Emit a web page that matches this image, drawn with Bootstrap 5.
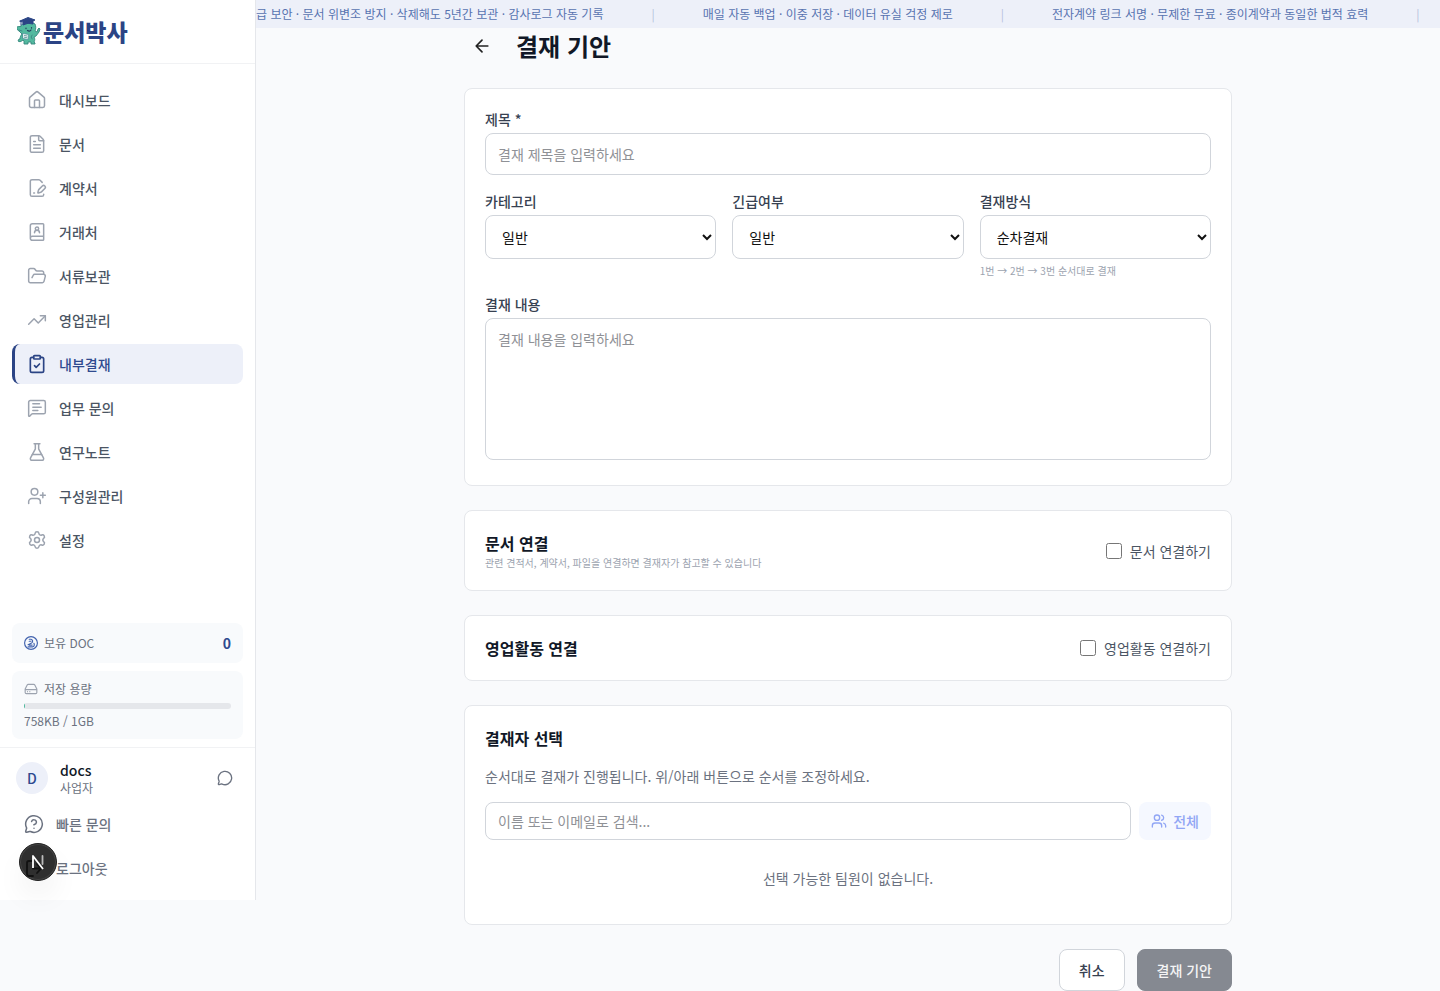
<!DOCTYPE html>
<html lang="ko">
<head>
<meta charset="utf-8">
<meta name="viewport" content="width=device-width, initial-scale=1">
<title>결재 기안 - 문서박사</title>
<link href="https://cdn.jsdelivr.net/npm/bootstrap@5.3.0/dist/css/bootstrap.min.css" rel="stylesheet">
<style>
  body { font-family: "Noto Sans CJK KR", sans-serif; font-size: 14px; line-height: 20px; background: #f9fafc; color: #111827; }
  a { text-decoration: none; }
  svg { flex: none; fill: none; stroke: currentColor; stroke-width: 1.8; stroke-linecap: round; stroke-linejoin: round; }
  .i20 { width: 20px; height: 20px; }
  .i16 { width: 16px; height: 16px; }
  .i14 { width: 14px; height: 14px; }
  .bold-line { stroke-width: 2; }
  .sidebar { width: 256px; background: #fff; border-right: 1px solid #e5e7eb; }
  .brand { height: 64px; padding: 0 17px 2px; border-bottom: 1px solid #f1f2f4; color: #2b4485; font-size: 23px; font-weight: 900; gap: 2px; }
  .brand svg { width: 24px; height: 30px; }
  .side-nav { padding: 16px 12px 63px; gap: 4px; }
  .side-link { height: 40px; padding: 0 12px; gap: 12px; border-left: 3px solid transparent; border-radius: 8px; color: #4b5563; font-weight: 500; }
  .side-link svg { color: #9ca3af; }
  .side-link.current { background: #edf0f9; border-color: #2b4485; color: #2f4a8f; }
  .side-link.current svg { color: #2b4485; stroke-width: 2; }
  .widget { background: #f8fafc; border-radius: 8px; padding: 10px 12px; font-size: 12px; line-height: 16px; color: #6b7280; }
  .widget svg { margin-right: 6px; }
  .coin { color: #4263ae; }
  .disk { color: #9ca3af; }
  .balance { font-size: 14px; line-height: 20px; font-weight: 700; color: #2f4a8f; }
  .progress.usage { height: 6px; margin: 6px 0 4px; border-radius: 3px; background: #e5e7eb; }
  .usage .progress-bar { background: #4cb89d; }
  .account { margin-top: 8px; padding: 12px 12px; border-top: 1px solid #f1f2f4; }
  .profile { padding: 0 10px 0 4px; height: 36px; margin-bottom: 8px; gap: 12px; }
  .avatar { width: 32px; height: 32px; background: #edf0f9; color: #2f4a8f; font-weight: 500; }
  .user-name { font-weight: 500; }
  .role { font-size: 12px; line-height: 16px; color: #6b7280; }
  .plain { background: none; border: 0; padding: 0; color: #6b7280; }
  .account-link { height: 40px; padding: 0 12px; gap: 12px; color: #6b7280; font-weight: 500; }
  .dev-badge { position: absolute; left: 19px; bottom: 19px; width: 38px; height: 38px; padding: 0; border: 1px solid #222; background: #2f2f2f; color: #fff; box-shadow: inset 0 0 0 1px #454545, 0 16px 32px -8px rgba(0,0,0,.14); }
  .ticker { height: 28px; overflow: hidden; background: #edf0f9; color: #5873b0; font-size: 12px; gap: 48px; }
  .ticker span { white-space: nowrap; flex: none; }
  .ticker .tick-sep { color: #b4c1dc; }
  main { min-width: 0; }
  .form-page { max-width: 768px; margin: 0 auto; }
  .page-head { height: 36px; gap: 16px; margin-bottom: 24px; }
  .page-head h1 { font-size: 24px; line-height: 32px; font-weight: 700; margin: 0; }
  .back { width: 36px; height: 36px; color: #222; }
  .panel { background: #fff; border: 1px solid #e5e7eb; border-radius: 8px; padding: 20px; margin-bottom: 24px; }
  .panel h2 { font-size: 16px; line-height: 24px; font-weight: 700; margin: 0; }
  .form-label { display: block; font-weight: 500; color: #374151; margin-bottom: 4px; }
  .field { display: block; width: 100%; background: #fff; border: 1px solid #d1d5db; border-radius: 8px; padding: 8px 12px; font-size: 14px; line-height: 24px; color: #111; }
  .field::placeholder { color: #8f9196; opacity: 1; }
  select.field { height: 44px; }
  textarea.field { height: 142px; resize: none; margin-bottom: 5px; }
  .search.field { line-height: 20px; }
  .tiny { font-size: 10px; line-height: 15px; color: #9ca3af; }
  .check-row { gap: 8px; color: #4b5563; }
  .check-row input { width: 16px; height: 16px; margin: 0; }
  .muted { color: #6b7280; }
  .empty-note { margin-top: 12px; }
  .all-btn { gap: 6px; border: 0; border-radius: 8px; padding: 0 12px; background: #f5f8ff; color: #91a6f5; font-weight: 500; }
  .actions { gap: 12px; }
  .act { height: 42px; border-radius: 8px; padding: 0 19px; font-size: 14px; font-weight: 500; border: 1px solid #d1d5db; background: #fff; color: #374151; }
  .act.main-act { background: #858991; border-color: #858991; color: #f4f4f5; }
</style>
</head>
<body>
<div class="d-flex align-items-start">
  <aside class="sidebar position-relative flex-shrink-0">
    <a href="#" class="brand d-flex align-items-center">
      <svg viewBox="0 0 24 30" aria-hidden="true">
        <path d="M4 10c0-1 1-2 2-2 3-1 9-2 12 0 1 2 1 5 0 7l2 1 1-3 1-1 1 1-1 3-3 4-2 1c1 2 1 3 0 5l1 1v1h-4v-2h-3v2H7v-3l-1-1c-2 2-4 2-5 1l1-2h1c0-2 1-4 2-5l-3-3c-2-1-3-3-2-4z" fill="#53b99f" stroke="#35877d" stroke-width=".9"/>
        <path d="M3 5l8-3.500L18 4l-7 3z" fill="#2b4485" stroke="#2b4485" stroke-width="1"/>
        <path d="M6 6v3q5-3 10-1V5zM4 5v4" fill="#2b4485" stroke="#2b4485" stroke-width="1"/>
        <path d="M9 12v.6M14.500 11.500v.6M10.500 14.500q2 1.500 3.500-.5" stroke="#213a5b" stroke-width="1.200"/>
        <path d="M6 17.500l5.500 1-.5 5-5-1z" fill="#f2faf8" stroke="#538b9b" stroke-width=".7"/>
        <path d="M7.500 19.500l2.500.5M7.300 21.200l2.500.5M15 19q-2 2 0 4M2 14l3 1" stroke="#35777b" stroke-width=".7"/>
      </svg>
      <span>문서박사</span>
    </a>
    <nav class="side-nav d-flex flex-column" aria-label="주 메뉴">
      <a href="#" class="side-link d-flex align-items-center"><svg class="i20" viewBox="0 0 24 24"><path d="M15 21v-8a1 1 0 0 0-1-1h-4a1 1 0 0 0-1 1v8"/><path d="M3 10a2 2 0 0 1 .709-1.528l7-5.999a2 2 0 0 1 2.582 0l7 5.999A2 2 0 0 1 21 10v9a2 2 0 0 1-2 2H5a2 2 0 0 1-2-2z"/></svg>대시보드</a>
      <a href="#" class="side-link d-flex align-items-center"><svg class="i20" viewBox="0 0 24 24"><path d="M6 22a2 2 0 0 1-2-2V4a2 2 0 0 1 2-2h8a2.4 2.4 0 0 1 1.704.706l3.588 3.588A2.4 2.4 0 0 1 20 8v12a2 2 0 0 1-2 2z"/><path d="M14 2v5a1 1 0 0 0 1 1h5M10 9H8M16 13H8M16 17H8"/></svg>문서</a>
      <a href="#" class="side-link d-flex align-items-center"><svg class="i20" viewBox="0 0 24 24"><path d="m18.226 5.226-2.52-2.52A2.4 2.4 0 0 0 14 2H6a2 2 0 0 0-2 2v16a2 2 0 0 0 2 2h12a2 2 0 0 0 2-2v-.351"/><path d="M21.378 12.626a1 1 0 0 0-3.004-3.004l-4.01 4.012a2 2 0 0 0-.506.854l-.837 2.87a.5.5 0 0 0 .62.62l2.87-.837a2 2 0 0 0 .854-.506z"/><path d="M8 18h1"/></svg>계약서</a>
      <a href="#" class="side-link d-flex align-items-center"><svg class="i20" viewBox="0 0 24 24"><path d="M15 13a3 3 0 1 0-6 0"/><path d="M4 19.5v-15A2.5 2.5 0 0 1 6.5 2H19a1 1 0 0 1 1 1v18a1 1 0 0 1-1 1H6.5a1 1 0 0 1 0-5H20"/><circle cx="12" cy="8" r="2"/></svg>거래처</a>
      <a href="#" class="side-link d-flex align-items-center"><svg class="i20" viewBox="0 0 24 24"><path d="m6 14 1.5-2.9A2 2 0 0 1 9.24 10H20a2 2 0 0 1 1.94 2.5l-1.54 6a2 2 0 0 1-1.95 1.5H4a2 2 0 0 1-2-2V5a2 2 0 0 1 2-2h3.9a2 2 0 0 1 1.69.9l.81 1.2a2 2 0 0 0 1.67.9H18a2 2 0 0 1 2 2v2"/></svg>서류보관</a>
      <a href="#" class="side-link d-flex align-items-center"><svg class="i20" viewBox="0 0 24 24"><path d="M16 7h6v6"/><path d="m22 7-8.5 8.5-5-5L2 17"/></svg>영업관리</a>
      <a href="#" class="side-link current d-flex align-items-center" aria-current="page"><svg class="i20" viewBox="0 0 24 24"><rect x="8" y="2" width="8" height="4" rx="1"/><path d="M16 4h2a2 2 0 0 1 2 2v14a2 2 0 0 1-2 2H6a2 2 0 0 1-2-2V6a2 2 0 0 1 2-2h2"/><path d="m9 14 2 2 4-4"/></svg>내부결재</a>
      <a href="#" class="side-link d-flex align-items-center"><svg class="i20" viewBox="0 0 24 24"><path d="M22 17a2 2 0 0 1-2 2H6.828a2 2 0 0 0-1.414.586l-2.202 2.202A.71.71 0 0 1 2 21.286V5a2 2 0 0 1 2-2h16a2 2 0 0 1 2 2z"/><path d="M7 11h10M7 15h6M7 7h8"/></svg>업무 문의</a>
      <a href="#" class="side-link d-flex align-items-center"><svg class="i20" viewBox="0 0 24 24"><path d="M14 2v6a2 2 0 0 0 .245.96l5.51 10.08A2 2 0 0 1 18 22H6a2 2 0 0 1-1.755-2.96l5.51-10.08A2 2 0 0 0 10 8V2"/><path d="M6.453 15h11.094M8.5 2h7"/></svg>연구노트</a>
      <a href="#" class="side-link d-flex align-items-center"><svg class="i20" viewBox="0 0 24 24"><path d="M16 21v-2a4 4 0 0 0-4-4H6a4 4 0 0 0-4 4v2"/><circle cx="9" cy="7" r="4"/><path d="M19 8v6M22 11h-6"/></svg>구성원관리</a>
      <a href="#" class="side-link d-flex align-items-center"><svg class="i20" viewBox="0 0 24 24"><path d="M9.671 4.136a2.34 2.34 0 0 1 4.659 0 2.34 2.34 0 0 0 3.319 1.915 2.34 2.34 0 0 1 2.33 4.033 2.34 2.34 0 0 0 0 3.831 2.34 2.34 0 0 1-2.33 4.033 2.34 2.34 0 0 0-3.319 1.915 2.34 2.34 0 0 1-4.659 0 2.34 2.34 0 0 0-3.32-1.915 2.34 2.34 0 0 1-2.33-4.033 2.34 2.34 0 0 0 0-3.831A2.34 2.34 0 0 1 6.35 6.051a2.34 2.34 0 0 0 3.319-1.915"/><circle cx="12" cy="12" r="3"/></svg>설정</a>
    </nav>
    <div class="d-flex flex-column gap-2 px-2 mx-1">
      <div class="widget d-flex align-items-center">
        <svg class="i14 coin" viewBox="0 0 24 24"><circle cx="12" cy="12" r="11" stroke-width="2"/><path d="M9 5.500h3a3.500 3.500 0 0 1 1 6.500l-6 3M9 9h3M7 18.500h8c3-1 3-4 2-6M9 15.500h5" stroke-width="2"/></svg>
        <span>보유 DOC</span><span class="balance ms-auto">0</span>
      </div>
      <div class="widget">
        <div class="d-flex align-items-center"><svg class="i14 disk bold-line" viewBox="0 0 24 24"><path d="M22 13H2M5.450 5.110 2 12v6a2 2 0 0 0 2 2h16a2 2 0 0 0 2-2v-6l-3.450-6.890A2 2 0 0 0 16.760 4H7.240a2 2 0 0 0-1.790 1.110zM6 16.500h.01M10 16.500h.01"/></svg>저장 용량</div>
        <div class="progress usage" role="progressbar" aria-label="저장 용량" aria-valuenow="0" aria-valuemin="0" aria-valuemax="100"><div class="progress-bar" style="width: 0.5%"></div></div>
        <div>758KB / 1GB</div>
      </div>
    </div>
    <div class="account">
      <div class="profile d-flex align-items-center">
        <span class="avatar rounded-circle d-flex align-items-center justify-content-center">D</span>
        <div class="me-auto"><div class="user-name">docs</div><div class="role">사업자</div></div>
        <button type="button" class="plain d-flex" aria-label="메시지"><svg class="i16 bold-line" viewBox="0 0 24 24"><path d="M2.992 16.342a2 2 0 0 1 .094 1.167l-1.065 3.290a1 1 0 0 0 1.236 1.168l3.413-.998a2 2 0 0 1 1.099.092 10 10 0 1 0-4.777-4.719"/></svg></button>
      </div>
      <a href="#" class="account-link d-flex align-items-center mb-1"><svg class="i20" viewBox="0 0 24 24"><path d="M2.992 16.342a2 2 0 0 1 .094 1.167l-1.065 3.290a1 1 0 0 0 1.236 1.168l3.413-.998a2 2 0 0 1 1.099.092 10 10 0 1 0-4.777-4.719"/><path d="M9.090 9a3 3 0 0 1 5.830 1c0 2-3 3-3 3M12 17h.01"/></svg>빠른 문의</a>
      <a href="#" class="account-link d-flex align-items-center"><svg class="i20" viewBox="0 0 24 24"><path d="m16 17 5-5-5-5M21 12H9M9 21H5a2 2 0 0 1-2-2V5a2 2 0 0 1 2-2h4"/></svg>로그아웃</a>
    </div>
    <button type="button" class="dev-badge rounded-circle d-flex align-items-center justify-content-center" aria-label="개발 도구"><svg class="w-100 h-100" viewBox="0 0 36 36"><path d="M13 32H9a2 2 0 0 1-2-2V19a2 2 0 0 1 2-2h4M13 24.500h8M17 20l4 4.500-4 4.500" stroke="#111"/><path d="M13 24V12l10 13" stroke-linecap="butt"/><path d="M22.500 12v8" stroke="#bbb"/></svg></button>
  </aside>
  <main class="flex-grow-1">
    <div class="ticker d-flex align-items-center">
      <span>급 보안 · 문서 위변조 방지 · 삭제해도 5년간 보관 · 감사로그 자동 기록</span><span class="tick-sep">|</span>
      <span>매일 자동 백업 · 이중 저장 · 데이터 유실 걱정 제로</span><span class="tick-sep">|</span>
      <span>전자계약 링크 서명 · 무제한 무료 · 종이계약과 동일한 법적 효력</span><span class="tick-sep">|</span>
    </div>
    <form class="form-page">
      <div class="page-head d-flex align-items-center">
        <button type="button" class="plain back d-flex align-items-center justify-content-center" aria-label="뒤로"><svg class="i20 bold-line" viewBox="0 0 24 24"><path d="m12 19-7-7 7-7M19 12H5"/></svg></button>
        <h1>결재 기안</h1>
      </div>
      <section class="panel">
        <div class="mb-3"><label class="form-label" for="title">제목 *</label><input class="field" id="title" type="text" placeholder="결재 제목을 입력하세요"></div>
        <div class="row gx-3 mb-3">
          <div class="col-4"><label class="form-label" for="cat">카테고리</label><select class="field" id="cat"><option>일반</option></select></div>
          <div class="col-4"><label class="form-label" for="urg">긴급여부</label><select class="field" id="urg"><option>일반</option></select></div>
          <div class="col-4"><label class="form-label" for="way">결재방식</label><select class="field" id="way"><option>순차결재</option></select><div class="tiny mt-1">1번 → 2번 → 3번 순서대로 결재</div></div>
        </div>
        <label class="form-label" for="content">결재 내용</label>
        <textarea class="field" id="content" placeholder="결재 내용을 입력하세요"></textarea>
      </section>
      <section class="panel d-flex align-items-center justify-content-between">
        <div><h2>문서 연결</h2><div class="tiny">관련 견적서, 계약서, 파일을 연결하면 결재자가 참고할 수 있습니다</div></div>
        <label class="check-row d-flex align-items-center"><input type="checkbox">문서 연결하기</label>
      </section>
      <section class="panel d-flex align-items-center justify-content-between">
        <h2>영업활동 연결</h2>
        <label class="check-row d-flex align-items-center"><input type="checkbox">영업활동 연결하기</label>
      </section>
      <section class="panel">
        <h2 class="mb-3">결재자 선택</h2>
        <p class="muted mb-3">순서대로 결재가 진행됩니다. 위/아래 버튼으로 순서를 조정하세요.</p>
        <div class="d-flex gap-2">
          <input class="field search" type="text" aria-label="결재자 검색" placeholder="이름 또는 이메일로 검색...">
          <button type="button" class="all-btn d-flex align-items-center flex-shrink-0"><svg class="i16 bold-line" viewBox="0 0 24 24"><path d="M16 21v-2a4 4 0 0 0-4-4H6a4 4 0 0 0-4 4v2M16 3.128a4 4 0 0 1 0 7.744M22 21v-2a4 4 0 0 0-3-3.870"/><circle cx="9" cy="7" r="4"/></svg>전체</button>
        </div>
        <p class="muted empty-note text-center py-3 mb-0">선택 가능한 팀원이 없습니다.</p>
      </section>
      <div class="actions d-flex justify-content-end">
        <button type="button" class="act">취소</button>
        <button type="submit" class="act main-act">결재 기안</button>
      </div>
    </form>
  </main>
</div>
<script src="https://cdn.jsdelivr.net/npm/bootstrap@5.3.0/dist/js/bootstrap.bundle.min.js"></script>
</body>
</html>
